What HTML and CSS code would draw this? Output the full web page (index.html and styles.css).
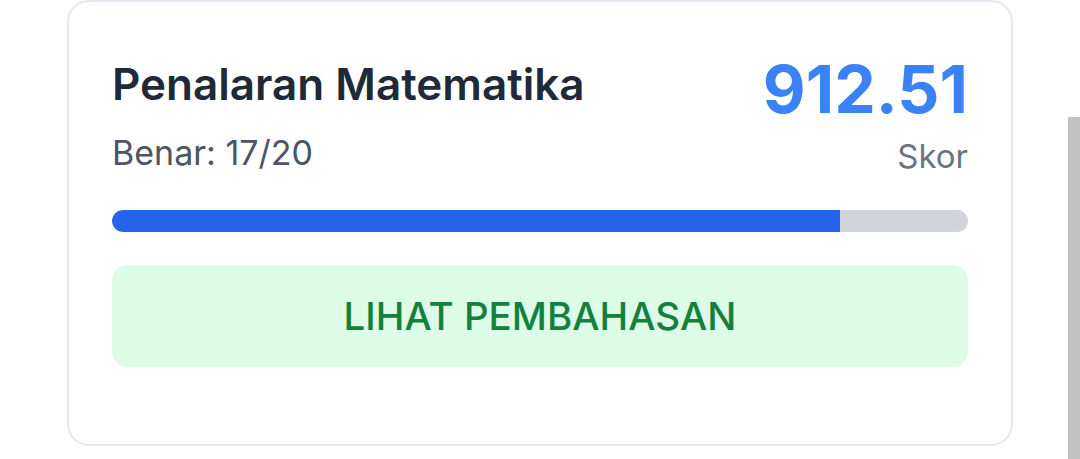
FILE: index.html
```html
<!DOCTYPE html>
<html lang="id">
<head>
<meta charset="utf-8">
<title>Hasil</title>
<link rel="stylesheet" href="styles.css">
</head>
<body>
<div class="page">
  <div class="card">
    <div class="header">
      <div class="info">
        <div class="title">Penalaran Matematika</div>
        <div class="correct">Benar: 17/20</div>
      </div>
      <div class="score-box">
        <div class="score">912.51</div>
        <div class="score-label">Skor</div>
      </div>
    </div>
    <div class="progress"><div class="progress-fill" style="width:85%"></div></div>
    <button class="btn">LIHAT PEMBAHASAN</button>
  </div>
</div>
<div class="scrollbar"></div>
</body>
</html>
```
FILE: styles.css
```css
html, body {
  margin: 0;
  padding: 0;
  background: #ffffff;
}
body {
  font-family: Inter, "Noto Sans", sans-serif;
  width: 1080px;
  height: 459px;
  overflow: hidden;
}
.page {
  padding-left: 67px;
}
.card {
  box-sizing: border-box;
  width: 946px;
  height: 446px;
  border: 2px solid #e2e8f0;
  border-radius: 22px;
  padding: 54px 43px 0 43px;
  display: flex;
  flex-direction: column;
}
.header {
  display: flex;
  justify-content: space-between;
  align-items: flex-start;
}
.info {
  display: flex;
  flex-direction: column;
  padding-top: 2px;
}
.title {
  font-size: 44px;
  font-weight: 600;
  color: #1f2937;
  line-height: 52px;
}
.correct {
  font-size: 34px;
  color: #4b5563;
  line-height: 40px;
  margin-top: 23px;
}
.score-box {
  display: flex;
  flex-direction: column;
  align-items: flex-end;
}
.score {
  font-size: 66px;
  font-weight: 700;
  color: #3b82f6;
  line-height: 66px;
}
.score-label {
  font-size: 33px;
  color: #6b7280;
  line-height: 40px;
  margin-top: 14px;
}
.progress {
  margin-top: 34px;
  height: 22px;
  background: #d1d5db;
  border-radius: 11px;
  overflow: hidden;
}
.progress-fill {
  height: 100%;
  background: #2563eb;
  border-radius: 11px 0 0 11px;
}
.btn {
  margin-top: 33px;
  height: 102px;
  border: none;
  border-radius: 16px;
  background: #dcfce7;
  color: #15803d;
  font-family: Inter, "Noto Sans", sans-serif;
  font-size: 38.5px;
  font-weight: 500;
  padding: 0;
}
.scrollbar {
  position: fixed;
  right: 0;
  top: 117px;
  bottom: 0;
  width: 12px;
  background: #c1c1c1;
}
```
